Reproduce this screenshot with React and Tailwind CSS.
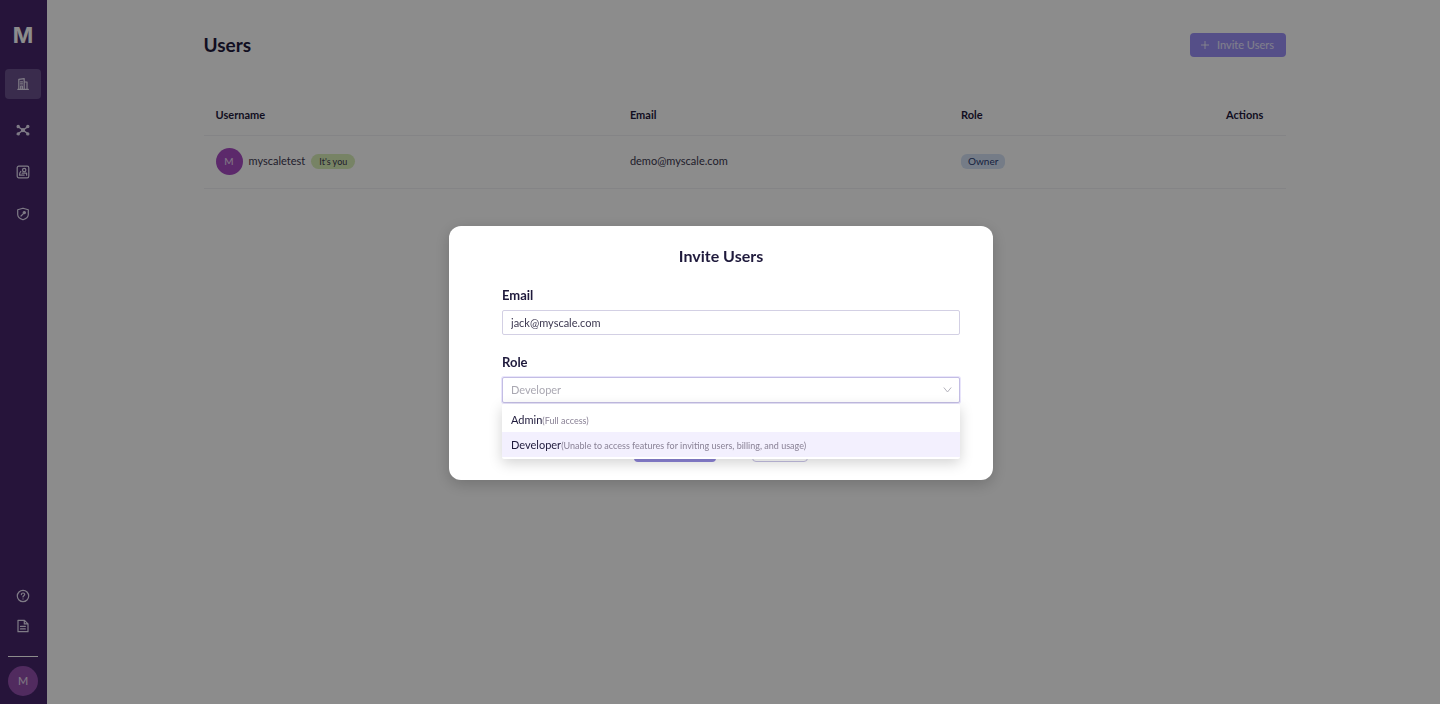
import React from "react";

function Icon({ children, size = 14 }) {
  return (
    <svg
      width={size}
      height={size}
      viewBox="0 0 14 14"
      fill="none"
      stroke="currentColor"
      strokeWidth="1.2"
      strokeLinecap="round"
      strokeLinejoin="round"
      aria-hidden="true"
    >
      {children}
    </svg>
  );
}

function ClusterIcon() {
  return (
    <Icon>
      <path d="M1.8 12.3h10.6M2.8 12.3V2.4l5.4-.8v10.7M8.2 5h2.8v7.1" />
      <path d="M4.5 4.8h2M4.5 6.8h2M4.7 12V9h1.7v3" />
    </Icon>
  );
}

function NetworkIcon() {
  return (
    <Icon>
      <path d="M2.6 4l4.4 3.1M11.4 4L7 7.1M2.6 10.4L7 7.3M11.4 10.4L7 7.3" strokeWidth="1.3" />
      <circle cx="7" cy="7.2" r="1.5" fill="currentColor" />
      <circle cx="2.2" cy="3.5" r="1.1" fill="currentColor" />
      <circle cx="11.8" cy="3.5" r="1.1" fill="currentColor" />
      <circle cx="2.2" cy="10.9" r="1.1" fill="currentColor" />
      <circle cx="11.8" cy="10.9" r="1.1" fill="currentColor" />
    </Icon>
  );
}

function AccountIcon() {
  return (
    <Icon>
      <rect x="1.2" y="1.2" width="11.6" height="11.6" rx="1.6" />
      <circle cx="8.2" cy="5.1" r="1.7" />
      <path d="M10.6 10.2V8.2H6.2M4.8 6.4c-1 1-1.3 2.1-1.3 3.8h4.6" />
    </Icon>
  );
}

function ShieldIcon() {
  return (
    <Icon>
      <path d="M7 1.2l5.3 1.6v4.6c0 2.4-2 4.2-5.3 5.4-3.3-1.2-5.3-3-5.3-5.4V2.8z" />
      <path d="M5 9l3.2-3.2" />
      <circle cx="8.3" cy="5.6" r="1.1" fill="currentColor" />
    </Icon>
  );
}

function HelpIcon() {
  return (
    <Icon>
      <circle cx="7" cy="7" r="5.7" />
      <path d="M5.4 5.6c0-2.2 3.3-2.1 3.3-.1 0 1.1-1.7 1.3-1.7 2.4M7 9.9v.1" />
    </Icon>
  );
}

function DocIcon() {
  return (
    <Icon>
      <path d="M2 1.3h6.5L12 4.8v7.9H2zM8.3 1.5v3.4h3.5M4.5 7.4h4.8M4.5 9.9h4.8" />
    </Icon>
  );
}

function NavLink({ label, active, children }) {
  return (
    <a
      href="#"
      aria-label={label}
      className={
        active
          ? "flex h-[30px] w-9 items-center justify-center rounded bg-[#6a518c]"
          : "flex h-[30px] w-9 items-center justify-center rounded"
      }
    >
      {children}
    </a>
  );
}

function Sidebar() {
  return (
    <aside className="flex w-[47px] shrink-0 flex-col items-center bg-[#45266b] pr-px pb-2 text-[#e8e0f4]">
      <a href="#" aria-label="Home" className="mt-5 font-[Inter,sans-serif] text-[22px] leading-[30px] font-bold text-white">
        M
      </a>
      <nav className="mt-[19px] flex flex-col items-center gap-4">
        <NavLink label="Clusters" active><ClusterIcon /></NavLink>
        <div className="flex flex-col gap-3">
          <NavLink label="Network"><NetworkIcon /></NavLink>
          <NavLink label="Account"><AccountIcon /></NavLink>
          <NavLink label="Security"><ShieldIcon /></NavLink>
        </div>
      </nav>
      <div className="mt-auto flex flex-col items-center">
        <NavLink label="Help"><HelpIcon /></NavLink>
        <NavLink label="Documentation"><DocIcon /></NavLink>
        <div className="mt-[15px] h-px w-[30px] bg-white" />
        <button aria-label="Profile" className="mt-[9px] size-[30px] rounded-full bg-[#944fae] text-[11px] text-white/80">
          M
        </button>
      </div>
    </aside>
  );
}

function UsersPage() {
  return (
    <main className="flex-1 bg-white pr-8 pl-[34px]">
      <div className="mx-auto w-full max-w-[1082px]">
        <header className="flex items-center justify-between pt-[33px]">
          <h1 className="text-[19px] leading-6 font-bold">Users</h1>
          <button className="flex h-6 w-24 items-center justify-center gap-2 rounded-sm bg-[#9b90f8] text-[11px] text-white/80">
            <svg width="8" height="8" viewBox="0 0 8 8" stroke="currentColor" strokeWidth="1" aria-hidden="true">
              <path d="M4 0v8M0 4h8" />
            </svg>
            Invite Users
          </button>
        </header>
        <table className="mt-[38px] w-full table-fixed text-left text-[11px]">
          <thead>
            <tr className="h-10 border-b border-[#f0f0f5]">
              <th className="w-[38.3%] px-3 font-bold">Username</th>
              <th className="w-[30.6%] px-3 font-bold">Email</th>
              <th className="w-[24.5%] px-3 font-bold">Role</th>
              <th className="px-3 font-bold">Actions</th>
            </tr>
          </thead>
          <tbody>
            <tr className="h-[53px] border-b border-[#f0f0f5] text-[#3c3850]">
              <td className="px-3">
                <div className="flex items-center">
                  <span className="flex size-[27px] items-center justify-center rounded-full bg-[#a84cc4] text-[10px] text-white/80">M</span>
                  <span className="ml-[6px]">myscaletest</span>
                  <span className="ml-[6px] rounded-full bg-[#d9efb8] px-2 text-[9px] leading-[15px]">It's you</span>
                </div>
              </td>
              <td className="px-3">demo@myscale.com</td>
              <td className="px-3">
                <span className="inline-block rounded-md bg-[#d5e2f6] px-[7px] text-[10px] leading-[15px] text-[#2b3c74]">Owner</span>
              </td>
              <td className="px-3" />
            </tr>
          </tbody>
        </table>
      </div>
    </main>
  );
}

const roles = [
  { name: "Admin", note: "(Full access)" },
  { name: "Developer", note: "(Unable to access features for inviting users, billing, and usage)" },
];

function RoleField() {
  return (
    <div className="mt-5">
      <label htmlFor="role" className="block text-[13px] leading-[15px] font-bold">Role</label>
      <div className="relative mt-[7px]">
        <select
          id="role"
          defaultValue="Developer"
          className="block h-[26px] w-full appearance-none rounded-xs border border-[#c3bde4] bg-white px-2 text-[11px] text-[#aaa8b2] shadow-[0_0_0_1px_#e9e5fb] outline-none"
        >
          {roles.map((role) => (
            <option key={role.name}>{role.name}</option>
          ))}
        </select>
        <svg className="pointer-events-none absolute top-[9px] right-2" width="9" height="8" viewBox="0 0 9 8" fill="none" stroke="#b4b2bc" aria-hidden="true">
          <path d="M.8 1.5l3.7 4.5 3.7-4.5" />
        </svg>
        <ul
          role="listbox"
          aria-label="Role options"
          className="absolute inset-x-0 top-full mt-px rounded-xs bg-white pt-[3px] pb-0.5 text-[11px] leading-[25px] shadow-[0_4px_14px_rgba(0,0,0,0.18)]"
        >
          {roles.map((role) => (
            <li
              key={role.name}
              role="option"
              aria-selected={role.name === "Developer"}
              className="flex h-[25px] items-baseline px-[9px] whitespace-nowrap aria-selected:bg-[#f3f0fe]"
            >
              {role.name}
              <span className="text-[9px] text-[#8a8296]">{role.note}</span>
            </li>
          ))}
        </ul>
      </div>
    </div>
  );
}

function InviteDialog() {
  return (
    <div className="fixed inset-0 flex items-center justify-center bg-black/45 pt-0.5 pl-0.5">
      <form
        role="dialog"
        aria-modal="true"
        aria-labelledby="invite-title"
        className="w-full max-w-[544px] rounded-xl bg-white pt-[19px] pb-[18px] shadow-[0_4px_16px_rgba(0,0,0,0.2)]"
      >
        <h2 id="invite-title" className="text-center text-base leading-[22px] font-bold">Invite Users</h2>
        <div className="mt-[21px] pr-[33px] pl-[53px]">
          <label htmlFor="email" className="block text-[13px] leading-[15px] font-bold">Email</label>
          <input
            id="email"
            type="email"
            defaultValue="jack@myscale.com"
            className="mt-[7px] block h-[25px] w-full rounded-xs border border-[#d3d0e4] px-2 text-[11px] text-[#3c3850] outline-none"
          />
          <RoleField />
        </div>
        <div className="mt-[34px] flex justify-center gap-9">
          <button type="submit" aria-label="Invite" className="h-[25px] w-[82px] rounded-sm bg-[#8d84d8]" />
          <button type="button" aria-label="Cancel" className="h-[25px] w-14 rounded-sm border border-[#c5c0e2]" />
        </div>
      </form>
    </div>
  );
}

export default function App() {
  return (
    <div className="flex min-h-screen font-[Lato,sans-serif] text-[#1f1a3c]">
      <Sidebar />
      <UsersPage />
      <InviteDialog />
    </div>
  );
}
